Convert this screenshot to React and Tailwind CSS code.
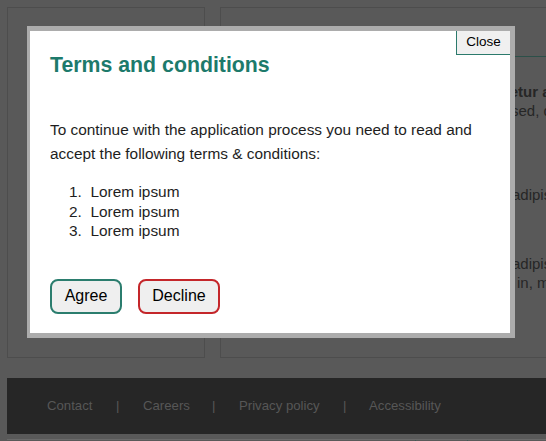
export default function App() {
  const font = "font-['Liberation_Sans',Arial,Helvetica,sans-serif]";
  return (
    <div className={`relative w-[546px] h-[441px] overflow-hidden bg-[#595959] ${font}`}>
      {/* background page */}
      <div className="flex gap-[15px] pl-[7px] pt-[7px]">
        <div className="w-[198px] h-[351px] shrink-0 border border-[#4d4d4d]" />
        <div className="w-[340px] h-[351px] shrink-0 overflow-hidden border-y border-l border-[#4d4d4d] text-[15px] text-[#262626] whitespace-nowrap">
          <div className="h-[49px] border-b border-[#2c5049]" />
          <div className="mt-[25px] leading-[19px] font-bold pl-[232px]">consectetur a</div>
          <div className="leading-[19px] pl-[290px]">sed, q</div>
          <div className="mt-[65px] leading-[19px] pl-[291px]">adipis</div>
          <div className="mt-[50px] leading-[19px] pl-[291px]">adipis</div>
          <div className="leading-[20px] pl-[296px]">in, m</div>
        </div>
      </div>

      <div className="mt-[20px] ml-[7px] h-[56px] bg-[#262626] flex items-center pl-[40px] text-[13.2px] text-[#575757] whitespace-nowrap">
        <span className="w-[69px] shrink-0">Contact</span>
        <span className="w-[27px] shrink-0">|</span>
        <span className="w-[69px] shrink-0">Careers</span>
        <span className="w-[27px] shrink-0">|</span>
        <span className="w-[104px] shrink-0">Privacy policy</span>
        <span className="w-[26px] shrink-0">|</span>
        <span className="shrink-0">Accessibility</span>
      </div>
      <div className="mt-[5px] ml-[7px] h-[10px] border-t border-[#6a6a6a] flex">
        <div className="ml-[408px] w-[53px] h-[8px] border-x border-[#3a5a54]" />
      </div>

      {/* modal */}
      <div className="absolute left-[27px] top-[26px] w-[488px] h-[312px] bg-[#acacac] border-[#acacac] border-l-[3px] border-t-[5px] border-r-[5px] border-b-[5px]">
        <div className="relative w-full h-full bg-white pl-[20px] pt-[22px] text-[#1e1e1e]">
          <button className="absolute top-0 right-0 w-[54px] h-[24px] bg-[#f0f0f0] border-l border-b border-[#2b7a6c] text-[13.5px] text-black flex items-center justify-center">
            Close
          </button>
          <h2 className="text-[21.3px] leading-[24px] font-bold text-[#1d7a6b]">Terms and conditions</h2>
          <p className="mt-[41px] text-[15.4px] leading-[24px] w-[450px]">
            To continue with the application process you need to read and accept the following terms &amp; conditions:
          </p>
          <ol className="mt-[16px] ml-[19px] text-[15.4px] leading-[19.5px]">
            <li className="flex"><span className="w-[21.5px]">1.</span>Lorem ipsum</li>
            <li className="flex"><span className="w-[21.5px]">2.</span>Lorem ipsum</li>
            <li className="flex"><span className="w-[21.5px]">3.</span>Lorem ipsum</li>
          </ol>
          <div className="mt-[38px] flex gap-[16px]">
            <button className="h-[35px] w-[72px] rounded-[8px] border-2 border-[#2b7d6e] bg-[#efefef] text-[16px] text-black flex items-center justify-center">
              Agree
            </button>
            <button className="h-[35px] w-[82px] rounded-[8px] border-2 border-[#c4262a] bg-[#efefef] text-[16px] text-black flex items-center justify-center">
              Decline
            </button>
          </div>
        </div>
      </div>
    </div>
  );
}
